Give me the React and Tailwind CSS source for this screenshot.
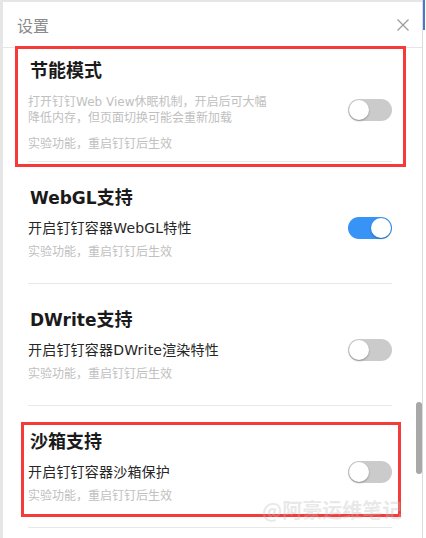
import React from 'react';

const CJK = { fontFamily: '"Noto Sans CJK SC", "Noto Sans", sans-serif' };
const MIX = { fontFamily: '"DejaVu Sans", "Noto Sans CJK SC", sans-serif' };

function Toggle({ on }) {
  return (
    <div
      className={`w-[44px] h-[22px] shrink-0 rounded-full p-[1px] flex items-center ${
        on ? 'bg-[#3793f5] justify-end' : 'bg-[#cbcbcb] justify-start'
      }`}
    >
      <div className="w-[20px] h-[20px] rounded-full bg-white shadow-[0_1px_2px_rgba(0,0,0,0.3)]" />
    </div>
  );
}

function Hint({ className = '' }) {
  return (
    <div className={`text-[12px] leading-[16px] text-[#c0c0c0] ${className}`}>
      实验功能，重启钉钉后生效
    </div>
  );
}

function Feature({ latin, title, desc, on }) {
  return (
    <div className="mx-[25px] mr-[24px] border-t border-[#e8e8e8] pt-[22px] pb-[24px]">
      <div className="pl-[2px] h-[24px] text-[18px] leading-[24px] font-bold text-[#1a1a1a]">
        {latin && (
          <span className="text-[17px]" style={MIX}>
            {latin}
          </span>
        )}
        {title}
      </div>
      <div className="mt-[9px] flex items-center justify-between h-[22px]">
        <div className="pt-[1px] text-[14px] leading-[21px] tracking-[0.2px] text-[#262626]" style={MIX}>
          {desc}
        </div>
        <Toggle on={on} />
      </div>
      <Hint className="mt-[4px]" />
    </div>
  );
}

export default function App() {
  return (
    <div className="relative w-[426px] h-[538px] overflow-hidden bg-[#e6e6e6] flex" style={CJK}>
      {/* page behind, left edge */}
      <div className="w-[3px] shrink-0" />

      {/* dialog */}
      <div className="mt-[2px] w-[419px] shrink-0 bg-white flex flex-col">
        <div className="h-[46px] shrink-0 flex items-center justify-between pl-[14px] pr-[13px] border-b border-[#e6e6e6]">
          <span className="text-[16px] leading-[20px] text-[#8a8a8a]">设置</span>
          <svg width="12" height="12" viewBox="0 0 12 12" className="text-[#9a9a9a]">
            <path d="M0.5 0.5 L11.5 11.5 M11.5 0.5 L0.5 11.5" stroke="currentColor" strokeWidth="1.2" fill="none" />
          </svg>
        </div>

        <div className="flex-1 flex overflow-hidden">
          <div className="flex-1 flex flex-col">
            {/* 节能模式 */}
            <div className="mx-[25px] mr-[24px] pt-[9px] pb-[10px]">
              <div className="pl-[2px] text-[18px] leading-[24px] font-bold text-[#1a1a1a]">节能模式</div>
              <div className="mt-[12px] flex items-center justify-between">
                <div className="pt-[1px] text-[12px] leading-[16px] text-[#c0c0c0]" style={MIX}>
                  打开钉钉Web View休眠机制，开启后可大幅
                  <br />
                  降低内存，但页面切换可能会重新加载
                </div>
                <Toggle on={false} />
              </div>
              <Hint className="mt-[9px]" />
            </div>

            <Feature latin="WebGL" title="支持" desc="开启钉钉容器WebGL特性" on />
            <Feature latin="DWrite" title="支持" desc="开启钉钉容器DWrite渲染特性" on={false} />
            <Feature title="沙箱支持" desc="开启钉钉容器沙箱保护" on={false} />
            <div className="mx-[25px] mr-[24px] border-t border-[#e8e8e8] h-[40px]" />
          </div>

          {/* scrollbar */}
          <div className="w-[6px] shrink-0">
            <div className="mt-[354px] h-[72px] rounded-full bg-[#a8a8a8]" />
          </div>
        </div>
      </div>

      {/* right edge of page behind */}
      <div className="w-[1px] shrink-0 bg-[#dcdcdc]" />
      <div className="flex-1 bg-white flex flex-col">
        <div className="h-[30px] w-[2px] bg-[#4a78d0]" />
      </div>

      {/* annotation boxes */}
      <div className="absolute left-[15px] top-[46px] w-[391px] h-[121px] border-[3px] border-[#f53a3a]" />
      <div className="absolute left-[21px] top-[422px] w-[380px] h-[95px] border-[3px] border-[#f53a3a]" />

      {/* watermark */}
      <div className="absolute left-[262px] top-[497px] text-[20px] leading-[26px] font-bold text-[rgba(190,190,190,0.35)] whitespace-nowrap">
        @阿豪运维笔记
      </div>
    </div>
  );
}
